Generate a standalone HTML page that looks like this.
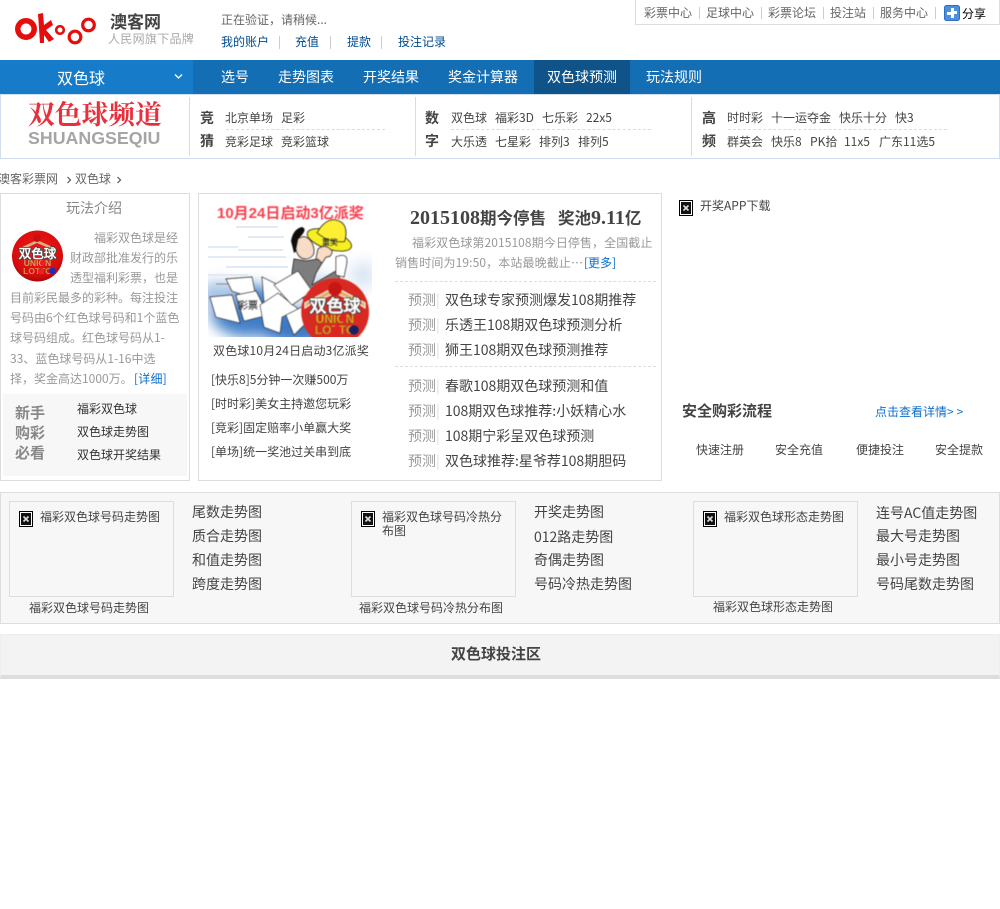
<!DOCTYPE html>
<html lang="zh"><head><meta charset="utf-8"><title>双色球</title>
<style>
html,body{margin:0;padding:0;background:#fff;width:1000px;height:909px;overflow:hidden}
body{position:relative;font:12px/20px "WenQuanYi Zen Hei","Noto Sans CJK SC",sans-serif;color:#444}
.t{position:absolute;white-space:nowrap;line-height:20px}
.b{position:absolute;box-sizing:border-box}
.h{font-size:14px}
.w{color:#fff;font-size:14px}
.g{color:#999}
.bl{color:#0b6fcf}
.n{color:#004b8c}
.bd{font-weight:bold}
.s{position:absolute;width:1px;background:#ccc}
svg{position:absolute;overflow:hidden}
</style></head><body>

<!-- top right -->
<div class="b" style="left:635px;top:-1px;width:365px;height:26px;border:1px solid #ddd"></div>
<span class="t" style="left:644px;top:3px;color:#666">彩票中心</span>
<span class="t" style="left:706px;top:3px;color:#666">足球中心</span>
<span class="t" style="left:768px;top:3px;color:#666">彩票论坛</span>
<span class="t" style="left:830px;top:3px;color:#666">投注站</span>
<span class="t" style="left:880px;top:3px;color:#666">服务中心</span>
<i class="s" style="left:699px;top:7px;height:12px"></i><i class="s" style="left:761px;top:7px;height:12px"></i><i class="s" style="left:823px;top:7px;height:12px"></i><i class="s" style="left:873px;top:7px;height:12px"></i><i class="s" style="left:935px;top:7px;height:12px"></i>
<svg style="left:944px;top:5px" width="16" height="16"><rect x=".5" y=".5" width="15" height="15" rx="2" fill="#4c8fe0" stroke="#2f6fc0"/><rect x="7" y="3" width="3" height="4" fill="#fff"/><rect x="3" y="7" width="5" height="3" fill="#fff"/><rect x="8" y="6" width="5" height="3" fill="#fff"/><rect x="7" y="9" width="3" height="4" fill="#fff"/></svg>
<span class="t" style="left:962px;top:4px;color:#000">分享</span>

<!-- logo -->
<svg style="left:12px;top:10px" width="88" height="40" viewBox="0 0 88 40">
<circle cx="14" cy="19" r="8.2" fill="none" stroke="#e60d0d" stroke-width="5.5"/>
<path d="M26 4 L31 3 L32 15 L39 10 L41 15 L34 20 L42 29 L37 32 L32 25 L32 33 L28 33 Z" fill="#e60d0d"/>
<circle cx="48" cy="20" r="3.8" fill="none" stroke="#e60d0d" stroke-width="2.6"/>
<circle cx="63" cy="27" r="5.8" fill="none" stroke="#e60d0d" stroke-width="3.2"/>
<circle cx="76.5" cy="15" r="5.8" fill="none" stroke="#e60d0d" stroke-width="3.2"/>
</svg>
<span class="t bd" style="left:110px;top:11px;font-size:17px;color:#444">澳客网</span>
<span class="t" style="left:108px;top:29px;color:#aaa;letter-spacing:.3px">人民网旗下品牌</span>
<span class="t" style="left:221px;top:10px;color:#666">正在验证，请稍候...</span>
<span class="t n" style="left:221px;top:32px">我的账户</span>
<span class="t n" style="left:295px;top:32px">充值</span>
<span class="t n" style="left:347px;top:32px">提款</span>
<span class="t n" style="left:398px;top:32px">投注记录</span>
<i class="s" style="left:279px;top:36px;height:13px"></i><i class="s" style="left:330px;top:36px;height:13px"></i><i class="s" style="left:381px;top:36px;height:13px"></i>

<!-- nav -->
<div class="b" style="left:0;top:60px;width:1000px;height:34px;background:#136eb4"></div>
<div class="b" style="left:0;top:60px;width:193px;height:34px;background:#167cc9"></div>
<div class="b" style="left:534px;top:60px;width:96px;height:34px;background:#0f5388"></div>
<span class="t w" style="left:57px;top:67px;font-size:16px">双色球</span>
<svg style="left:174px;top:73px" width="9" height="8"><path d="M1 1.5 L4.5 5 L8 1.5" fill="none" stroke="#fff" stroke-width="1.3"/></svg>
<span class="t w" style="left:221px;top:67px">选号</span>
<span class="t w" style="left:278px;top:67px">走势图表</span>
<span class="t w" style="left:363px;top:67px">开奖结果</span>
<span class="t w" style="left:448px;top:67px">奖金计算器</span>
<span class="t w" style="left:547px;top:67px">双色球预测</span>
<span class="t w" style="left:646px;top:67px">玩法规则</span>

<!-- channel -->
<div class="b" style="left:0;top:94px;width:1000px;height:65px;border:1px solid #cfdfee"></div>
<i class="s" style="left:189px;top:97px;height:59px;background:#cfdfee"></i>
<i class="s" style="left:415px;top:97px;height:59px;background:#cfdfee"></i>
<i class="s" style="left:691px;top:97px;height:59px;background:#cfdfee"></i>
<span class="t" style="left:28px;top:101px;font:bold 26.8px/24px 'Noto Serif CJK SC',serif;color:#e8303c">双色球频道</span>
<span class="t" style="left:28px;top:128px;font:bold 17.8px/20px 'Liberation Sans',sans-serif;color:#a5a5a5">SHUANGSEQIU</span>

<span class="t h bd" style="left:200px;top:108px">竞</span><span class="t h bd" style="left:200px;top:131px">猜</span>
<span class="t" style="left:225px;top:108px">北京单场</span><span class="t" style="left:281px;top:108px">足彩</span>
<span class="t" style="left:225px;top:132px">竞彩足球</span><span class="t" style="left:281px;top:132px">竞彩篮球</span>
<div class="b" style="left:226px;top:129px;width:159px;border-top:1px dashed #d5dde5"></div>

<span class="t h bd" style="left:425px;top:108px">数</span><span class="t h bd" style="left:425px;top:131px">字</span>
<span class="t" style="left:451px;top:108px">双色球</span><span class="t" style="left:495px;top:108px">福彩3D</span><span class="t" style="left:542px;top:108px">七乐彩</span><span class="t" style="left:586px;top:108px">22x5</span>
<span class="t" style="left:451px;top:132px">大乐透</span><span class="t" style="left:495px;top:132px">七星彩</span><span class="t" style="left:539px;top:132px">排列3</span><span class="t" style="left:578px;top:132px">排列5</span>
<div class="b" style="left:451px;top:129px;width:200px;border-top:1px dashed #d5dde5"></div>

<span class="t h bd" style="left:702px;top:108px">高</span><span class="t h bd" style="left:702px;top:131px">频</span>
<span class="t" style="left:727px;top:108px">时时彩</span><span class="t" style="left:771px;top:108px">十一运夺金</span><span class="t" style="left:839px;top:108px">快乐十分</span><span class="t" style="left:895px;top:108px">快3</span>
<span class="t" style="left:727px;top:132px">群英会</span><span class="t" style="left:771px;top:132px">快乐8</span><span class="t" style="left:810px;top:132px">PK拾</span><span class="t" style="left:844px;top:132px">11x5</span><span class="t" style="left:879px;top:132px">广东11选5</span>
<div class="b" style="left:728px;top:129px;width:219px;border-top:1px dashed #d5dde5"></div>

<!-- breadcrumb -->
<span class="t" style="left:-2px;top:169px;color:#666">澳客彩票网</span><span class="t" style="left:75px;top:169px;color:#666">双色球</span>
<svg style="left:66px;top:176px" width="6" height="8"><path d="M1.5 1L4.5 4L1.5 7" fill="none" stroke="#555" stroke-width="1.2"/></svg>
<svg style="left:116px;top:176px" width="6" height="8"><path d="M1.5 1L4.5 4L1.5 7" fill="none" stroke="#555" stroke-width="1.2"/></svg>

<!-- left box -->
<div class="b" style="left:0;top:193px;width:190px;height:288px;border:1px solid #ddd"></div>
<span class="t h" style="left:66px;top:198px;color:#888">玩法介绍</span>
<svg style="left:11px;top:230px" width="53" height="53" viewBox="0 0 53 53">
<defs><radialGradient id="r1" cx=".5" cy=".4" r=".65"><stop offset="0" stop-color="#f01a1a"/><stop offset=".75" stop-color="#d80c0c"/><stop offset="1" stop-color="#8c0a0a"/></radialGradient></defs>
<circle cx="26.5" cy="26" r="25.5" fill="url(#r1)"/>
<path d="M9 18 L26 10 L44 18 L44 21 L40 19 L26 13 L13 19 L9 21Z" fill="#d8b080"/>
<circle cx="26" cy="8" r="4" fill="#c81010"/>
<text x="26.5" y="28" text-anchor="middle" font-family="'WenQuanYi Zen Hei',sans-serif" font-size="12.5" font-weight="bold" fill="#fff" stroke="#444" stroke-width="1.6" style="paint-order:stroke">双色球</text>
<text x="26.5" y="36" text-anchor="middle" font-family="'Liberation Sans',sans-serif" font-size="8.5" font-weight="bold" fill="#c8a060">UNION</text>
<text x="26.5" y="44" text-anchor="middle" font-family="'Liberation Sans',sans-serif" font-size="8.5" font-weight="bold" fill="#c89050">LOTTO</text>
<circle cx="32" cy="33" r="3" fill="#e82020"/><circle cx="30" cy="41" r="3.2" fill="#e82020"/><circle cx="41.5" cy="41" r="3.4" fill="#1a2fc0"/>
</svg>
<span class="t g" style="left:94px;top:228px">福彩双色球是经</span>
<span class="t g" style="left:70px;top:248px">财政部批准发行的乐</span>
<span class="t g" style="left:70px;top:268px">透型福利彩票，也是</span>
<span class="t g" style="left:10px;top:288px">目前彩民最多的彩种。每注投注</span>
<span class="t g" style="left:10px;top:308px">号码由6个红色球号码和1个蓝色</span>
<span class="t g" style="left:10px;top:328px">球号码组成。红色球号码从1-</span>
<span class="t g" style="left:10px;top:349px">33、蓝色球号码从1-16中选</span>
<span class="t g" style="left:10px;top:369px">择，奖金高达1000万。</span><span class="t bl" style="left:134px;top:369px;letter-spacing:.2px">[详细]</span>
<div class="b" style="left:3px;top:394px;width:184px;height:82px;background:#f7f7f7"></div>
<span class="t bd" style="left:15px;top:403px;font-size:15px;color:#888">新手</span>
<span class="t bd" style="left:15px;top:423px;font-size:15px;color:#888">购彩</span>
<span class="t bd" style="left:15px;top:443px;font-size:15px;color:#888">必看</span>
<span class="t" style="left:77px;top:399px;color:#333">福彩双色球</span>
<span class="t" style="left:77px;top:422px;color:#333">双色球走势图</span>
<span class="t" style="left:77px;top:445px;color:#333">双色球开奖结果</span>

<!-- middle box -->
<div class="b" style="left:198px;top:193px;width:464px;height:288px;border:1px solid #ddd"></div>
<svg style="left:208px;top:205px" width="164" height="132" viewBox="0 0 164 132">
<defs>
<filter id="sf" x="-5%" y="-5%" width="110%" height="110%"><feGaussianBlur stdDeviation=".45"/></filter>
<filter id="sf2" x="-30%" y="-30%" width="160%" height="160%"><feGaussianBlur stdDeviation="7"/></filter>
</defs>
<rect width="164" height="132" fill="#fff"/>
<g filter="url(#sf2)">
<ellipse cx="40" cy="106" rx="38" ry="26" fill="#3f7fc8"/>
<ellipse cx="10" cy="90" rx="20" ry="14" fill="#a7c5e6"/>
<ellipse cx="90" cy="122" rx="40" ry="18" fill="#3a78c4"/>
<ellipse cx="108" cy="84" rx="22" ry="14" fill="#c4d8ee"/>
<ellipse cx="155" cy="70" rx="14" ry="14" fill="#dbe7f4"/>
</g>
<g stroke="#e2eaf3" stroke-width="2"><path d="M28 22H70M40 32H76M0 42H30M30 45H75M0 52H78M18 62H80M0 70H40"/></g>
<g filter="url(#sf)">
<g stroke="#888" stroke-width="1"><path d="M8 79H30"/></g>
<text x="9" y="13" font-family="'Liberation Sans','Noto Sans CJK SC',sans-serif" font-size="15" font-weight="bold" fill="#f8404e">10月24日启动3亿派奖</text>
<g transform="rotate(18 122 33)"><ellipse cx="122" cy="35" rx="23" ry="9" fill="#f6f020" stroke="#111"/><path d="M108 32 Q112 14 124 14 Q136 14 137 32 Q122 38 108 32Z" fill="#ffef30" stroke="#111"/></g>
<text x="122" y="40" text-anchor="middle" font-family="'WenQuanYi Zen Hei',sans-serif" font-size="8" font-weight="bold" fill="#333">重奖</text>
<path d="M83 36 Q85 24 94 22 Q100 24 92 32 L94 42 L86 48Z" fill="#111"/>
<path d="M90 34 Q98 28 104 38 Q110 52 98 54 Q90 54 88 44Z" fill="#f8dcc6" stroke="#222"/>
<path d="M110 44 Q118 38 124 46 Q124 52 118 52 L114 58 L108 54Z" fill="#f8dcc6" stroke="#222"/>
<path d="M86 54 L98 56 L110 54 L114 58 L108 68 L104 80 L128 66 L132 74 L100 96 L92 92 L72 86 L78 80 L88 82 L84 68Z" fill="#7d7d7d" stroke="#333"/>
<path d="M128 52 Q142 46 138 62 L136 72 L128 70Z" fill="#fff" stroke="#444"/>
<path d="M74 82 L82 86 L78 96 L68 94 Q66 86 74 82Z" fill="#fff" stroke="#444"/>
<g fill="#fff" stroke="#333" stroke-width=".9">
<path d="M18 74 L44 72 L48 94 L24 86Z"/><path d="M2 92 L24 90 L32 118 L8 112Z"/><path d="M28 90 L48 86 L60 110 L36 116Z"/><path d="M54 72 L70 80 L76 88 L68 92 L66 104 L56 96Z"/><path d="M52 100 L70 88 L90 104 L74 112 L72 128 L56 122Z"/><path d="M66 80 L90 66 L104 86 L84 100Z"/><path d="M78 110 L98 100 L104 112 L86 130Z"/>
</g>
<text x="40" y="104" text-anchor="middle" font-family="'WenQuanYi Zen Hei',sans-serif" font-size="10" font-weight="bold" fill="#444">彩票</text>
<circle cx="127" cy="107" r="34" fill="#d82a20"/>
<path d="M97 98 L127 82 L157 98 L157 103 L150 98 L127 88 L104 98 L97 103Z" fill="#e2b060" stroke="#fff" stroke-width=".8"/>
<circle cx="127" cy="84" r="7" fill="#c81818"/>
<text x="127" y="107" text-anchor="middle" font-family="'WenQuanYi Zen Hei',sans-serif" font-size="17" font-weight="bold" fill="#fff" stroke="#333" stroke-width="2" style="paint-order:stroke">双色球</text>
<text x="127" y="118" text-anchor="middle" font-family="'Liberation Sans',sans-serif" font-size="12" font-weight="bold" fill="#f0b010" stroke="#333" stroke-width=".3">UNION</text>
<text x="127" y="129" text-anchor="middle" font-family="'Liberation Sans',sans-serif" font-size="12" font-weight="bold" fill="#f0a020" stroke="#333" stroke-width=".3">LOTTO</text>
<circle cx="135" cy="113" r="4" fill="#e02020"/><circle cx="129" cy="125" r="4.5" fill="#e02020"/><circle cx="146" cy="125" r="5" fill="#14205c"/>
</g>
</svg>
<span class="t" style="left:213px;top:341px;letter-spacing:.18px">双色球10月24日启动3亿派奖</span>
<span class="t" style="left:211px;top:370px">[快乐8]5分钟一次赚500万</span>
<span class="t" style="left:211px;top:394px">[时时彩]美女主持邀您玩彩</span>
<span class="t" style="left:211px;top:418px">[竞彩]固定赔率小单赢大奖</span>
<span class="t" style="left:211px;top:442px">[单场]统一奖池过关串到底</span>

<span class="t bd" style="left:410px;top:207px;color:#444;font-size:16.5px"><span style="font:bold 20px 'Liberation Serif',serif">2015108</span>期今停售</span>
<span class="t bd" style="left:558px;top:207px;color:#444;font-size:16.5px">奖池<span style="font:bold 20px 'Liberation Serif',serif">9.11</span>亿</span>
<span class="t g" style="left:412px;top:233px;letter-spacing:.08px">福彩双色球第2015108期今日停售，全国截止</span>
<span class="t g" style="left:395px;top:253px;letter-spacing:.12px">销售时间为19:50，本站最晚截止…</span><span class="t bl" style="left:584px;top:253px">[更多]</span>
<div class="b" style="left:395px;top:281px;width:261px;border-top:1px dashed #ddd"></div>
<div class="b" style="left:395px;top:366px;width:261px;border-top:1px dashed #ddd"></div>
<span class="t h" style="left:408px;top:290px"><span style="color:#999">预测</span><span style="color:#ddd">|</span></span><span class="t h" style="left:445px;top:290px">双色球专家预测爆发108期推荐</span>
<span class="t h" style="left:408px;top:315px"><span style="color:#999">预测</span><span style="color:#ddd">|</span></span><span class="t h" style="left:445px;top:315px">乐透王108期双色球预测分析</span>
<span class="t h" style="left:408px;top:340px"><span style="color:#999">预测</span><span style="color:#ddd">|</span></span><span class="t h" style="left:445px;top:340px">狮王108期双色球预测推荐</span>
<span class="t h" style="left:408px;top:376px"><span style="color:#999">预测</span><span style="color:#ddd">|</span></span><span class="t h" style="left:445px;top:376px">春歌108期双色球预测和值</span>
<span class="t h" style="left:408px;top:401px"><span style="color:#999">预测</span><span style="color:#ddd">|</span></span><span class="t h" style="left:445px;top:401px">108期双色球推荐:小妖精心水</span>
<span class="t h" style="left:408px;top:426px"><span style="color:#999">预测</span><span style="color:#ddd">|</span></span><span class="t h" style="left:445px;top:426px">108期宁彩呈双色球预测</span>
<span class="t h" style="left:408px;top:451px"><span style="color:#999">预测</span><span style="color:#ddd">|</span></span><span class="t h" style="left:445px;top:451px">双色球推荐:星爷荐108期胆码</span>

<!-- right -->
<svg style="left:679px;top:200px" width="14" height="16"><rect x=".5" y=".5" width="13" height="15" fill="#fff" stroke="#000"/><rect x="2" y="2" width="10" height="12" fill="#111"/><path d="M4.5 5.5L9.5 10.5M9.5 5.5L4.5 10.5" stroke="#ddd" stroke-width="1.6"/></svg>
<span class="t" style="left:700px;top:196px">开奖APP下载</span>
<span class="t bd" style="left:682px;top:401px;font-size:15px">安全购彩流程</span>
<span class="t bl" style="left:875px;top:402px">点击查看详情<span style="letter-spacing:3px">&gt;&gt;</span></span>
<span class="t" style="left:696px;top:440px">快速注册</span><span class="t" style="left:775px;top:440px">安全充值</span><span class="t" style="left:856px;top:440px">便捷投注</span><span class="t" style="left:935px;top:440px">安全提款</span>

<!-- charts -->
<div class="b" style="left:0;top:492px;width:1000px;height:132px;background:#f7f7f7;border:1px solid #ddd"></div>
<div class="b" style="left:9px;top:501px;width:165px;height:96px;border:1px solid #ddd"></div>
<div class="b" style="left:351px;top:501px;width:165px;height:96px;border:1px solid #ddd"></div>
<div class="b" style="left:693px;top:501px;width:165px;height:96px;border:1px solid #ddd"></div>
<svg style="left:19px;top:511px" width="14" height="16"><rect x=".5" y=".5" width="13" height="15" fill="#fff" stroke="#000"/><rect x="2" y="2" width="10" height="12" fill="#111"/><path d="M4.5 5.5L9.5 10.5M9.5 5.5L4.5 10.5" stroke="#ddd" stroke-width="1.6"/></svg>
<svg style="left:361px;top:511px" width="14" height="16"><rect x=".5" y=".5" width="13" height="15" fill="#fff" stroke="#000"/><rect x="2" y="2" width="10" height="12" fill="#111"/><path d="M4.5 5.5L9.5 10.5M9.5 5.5L4.5 10.5" stroke="#ddd" stroke-width="1.6"/></svg>
<svg style="left:703px;top:511px" width="14" height="16"><rect x=".5" y=".5" width="13" height="15" fill="#fff" stroke="#000"/><rect x="2" y="2" width="10" height="12" fill="#111"/><path d="M4.5 5.5L9.5 10.5M9.5 5.5L4.5 10.5" stroke="#ddd" stroke-width="1.6"/></svg>
<span class="t" style="left:40px;top:507px">福彩双色球号码走势图</span>
<span class="t" style="left:382px;top:510px;line-height:14px">福彩双色球号码冷热分<br>布图</span>
<span class="t" style="left:724px;top:507px">福彩双色球形态走势图</span>
<span class="t" style="left:29px;top:598px">福彩双色球号码走势图</span>
<span class="t" style="left:359px;top:598px">福彩双色球号码冷热分布图</span>
<span class="t" style="left:713px;top:597px">福彩双色球形态走势图</span>
<span class="t h" style="left:192px;top:502px">尾数走势图</span><span class="t h" style="left:192px;top:526px">质合走势图</span><span class="t h" style="left:192px;top:550px">和值走势图</span><span class="t h" style="left:192px;top:574px">跨度走势图</span>
<span class="t h" style="left:534px;top:502px">开奖走势图</span><span class="t h" style="left:534px;top:527px">012路走势图</span><span class="t h" style="left:534px;top:550px">奇偶走势图</span><span class="t h" style="left:534px;top:574px">号码冷热走势图</span>
<span class="t h" style="left:876px;top:503px">连号AC值走势图</span><span class="t h" style="left:876px;top:526px">最大号走势图</span><span class="t h" style="left:876px;top:550px">最小号走势图</span><span class="t h" style="left:876px;top:574px">号码尾数走势图</span>

<!-- bet header -->
<div class="b" style="left:0;top:634px;width:1000px;height:45px;background:#f3f3f3;border:1px solid #eee;border-bottom:4px solid #ddd"></div>
<span class="t bd" style="left:451px;top:644px;font-size:15px">双色球投注区</span>
</body></html>
